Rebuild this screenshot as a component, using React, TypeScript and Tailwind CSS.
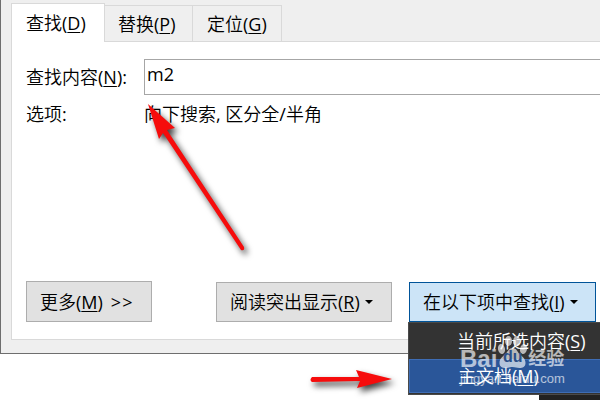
import React from 'react';

const Label: React.FC<{ text: string; hotkey: string; suffix?: string }> = ({ text, hotkey, suffix = '' }) => (
    <span className="whitespace-pre">
        {text}(<span className="underline decoration-1 underline-offset-2">{hotkey}</span>){suffix}
    </span>
);

const Caret: React.FC = () => (
    <span className="ml-[5px] border-x-4 border-t-4 border-x-transparent border-t-black" />
);

const tabs = [
    { text: '查找', hotkey: 'D', style: 'h-[39px] w-[94px] border-t border-x border-[#d9d9d9] bg-white pl-[14px] text-left' },
    { text: '替换', hotkey: 'P', style: 'h-[37px] w-[88px] border-y border-r border-[#d9d9d9] bg-[#efefef] pl-[13px] text-left' },
    { text: '定位', hotkey: 'G', style: 'h-[37px] w-[89px] border-y border-r border-[#d9d9d9] bg-[#efefef] pl-[14px] text-left' }
];

const TabBar: React.FC = () => (
    <div role="tablist" className="flex items-end">
        {tabs.map((tab, i) => (
            <button key={tab.hotkey} role="tab" aria-selected={i === 0} className={tab.style}>
                <Label text={tab.text} hotkey={tab.hotkey} />
            </button>
        ))}
        <div className="h-px flex-1 bg-[#d9d9d9]" />
    </div>
);

const FindMenu: React.FC = () => (
    <div className="absolute top-full -left-px w-[240px]">
        <div role="menu" className="border border-[#4a4a4a] bg-[#333333] pb-px text-white">
            <button role="menuitem" className="block h-9 w-full pl-12 text-left">
                <Label text="当前所选内容" hotkey="S" />
            </button>
            <button role="menuitem" className="block h-[34px] w-full border border-[#3e6db5] bg-[#2a5699] pl-12 text-left">
                <Label text="主文档" hotkey="M" />
            </button>
        </div>
        <div className="ml-[131px] h-[5px] bg-[#222222]" />
    </div>
);

const Watermark: React.FC = () => (
    <div className="pointer-events-none absolute top-[336px] left-[460px] font-['Liberation_Sans','Noto_Sans_CJK_SC',sans-serif] text-white/65">
        <div className="flex h-[33px] items-end">
            <span className="text-[24px] leading-5 font-bold">Bai</span>
            <span className="relative h-[34px] w-[31px]">
                <svg viewBox="0 0 30 34" className="h-full w-full" fill="currentColor" aria-hidden="true">
                    <ellipse cx="4" cy="14" rx="3.5" ry="5" transform="rotate(-12 4 14)" />
                    <ellipse cx="11" cy="6" rx="3.5" ry="5" />
                    <ellipse cx="19" cy="6" rx="3.5" ry="5" transform="rotate(10 19 6)" />
                    <ellipse cx="26" cy="14" rx="3.5" ry="5" transform="rotate(12 26 14)" />
                    <path d="M15 13c-4 0-5 4-7 6s-6 4-6 9c0 4 3 5 6 5 3 0 4-1 7-1s4 1 7 1c3 0 6-1 6-5 0-5-4-7-6-9s-3-6-7-6z" />
                </svg>
                <span className="absolute inset-x-0 bottom-1 text-center text-[16px] leading-4 font-bold text-[#2a4f88]">du</span>
            </span>
            <span className="text-[18px] leading-5 font-bold">经验</span>
        </div>
        <div className="mt-0.5 text-[13px] leading-4">jingyan.baidu.com</div>
    </div>
);

const Arrows: React.FC = () => (
    <svg
        viewBox="0 0 600 400"
        className="pointer-events-none absolute top-0 left-0 h-[400px] w-[600px] drop-shadow-[3px_4px_3px_rgba(0,0,0,0.75)]"
        fill="#f60c0c"
        aria-hidden="true"
    >
        <path d="M148 104L175 128L167 130L244 247Q245 251 241 250L163 133L159 139Z" />
        <path d="M312 377L359 377L356 370L392 379L357 388L360 381L312 382Q309 380 312 377Z" />
    </svg>
);

const App: React.FC = () => {
    const buttonStyle = 'flex items-center border border-[#adadad] bg-[#e1e1e1] px-[13px] whitespace-nowrap';

    return (
        <main className="relative min-h-screen overflow-hidden bg-white font-['Open_Sans','Noto_Sans_CJK_SC_DemiLight','Noto_Sans_CJK_SC',sans-serif] text-[18px] leading-7 text-black">
            <section role="dialog" aria-label="查找和替换" className="border-b border-l border-[#6e6e6e] bg-[#efefef] pt-[3px] pb-[13px] pl-[10px]">
                <TabBar />
                <div role="tabpanel" className="border-b border-l border-[#d9d9d9] bg-white pt-[17px] pb-[17px] pl-[14px]">
                    <div className="flex items-center">
                        <label htmlFor="find" className="w-[118px]"><Label text="查找内容" hotkey="N" suffix=":" /></label>
                        <input
                            id="find"
                            type="text"
                            defaultValue="m2"
                            className="h-9 min-w-0 flex-1 border-y border-l border-[#a6a6a6] bg-white px-[2px] pb-1.5 outline-none"
                        />
                    </div>
                    <div className="mt-[5px] flex">
                        <span className="w-[118px]">选项:</span>
                        <span>向下搜索, 区分全/半角</span>
                    </div>
                    <div className="mt-[153px] flex items-end justify-between pr-1">
                        <button className={`${buttonStyle} h-[41px] w-[126px] gap-2`}>
                            <Label text="更多" hotkey="M" />
                            <span className="flex gap-px"><span>&gt;</span><span>&gt;</span></span>
                        </button>
                        <div className="flex gap-[17px]">
                            <button className={`${buttonStyle} h-10 w-[176px]`}><Label text="阅读突出显示" hotkey="R" /><Caret /></button>
                            <div className="relative">
                                <button aria-haspopup="menu" aria-expanded="true" className="flex h-10 w-[187px] items-center border border-[#005499] bg-[#cce4f7] px-[13px] whitespace-nowrap">
                                    <Label text="在以下项中查找" hotkey="I" /><Caret />
                                </button>
                                <FindMenu />
                            </div>
                        </div>
                    </div>
                </div>
            </section>
            <Watermark />
            <Arrows />
        </main>
    );
};

export default App;
